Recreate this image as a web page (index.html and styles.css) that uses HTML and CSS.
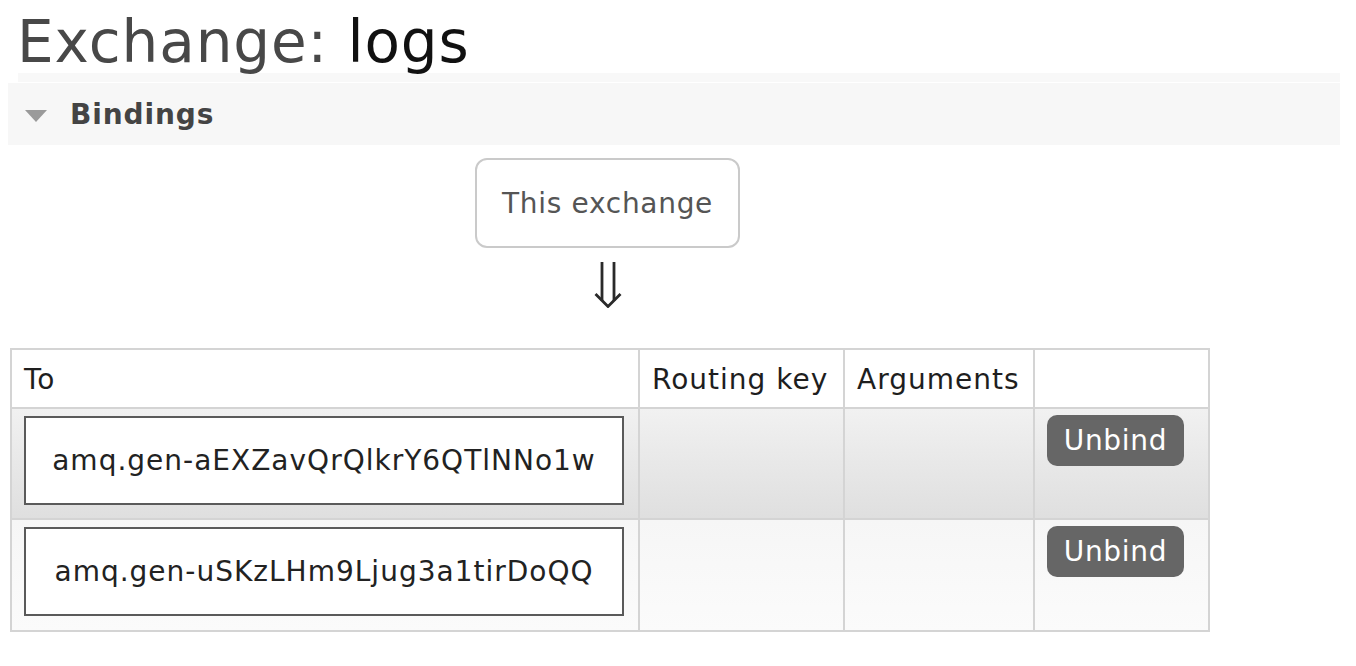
FILE: index.html
```html
<!DOCTYPE html>
<html>
<head>
<meta charset="utf-8">
<title>Exchange: logs</title>
<link rel="stylesheet" href="styles.css">
</head>
<body>
<div class="page">
  <h1 class="title">Exchange: <b class="name">logs</b></h1>
  <div class="strip"></div>
  <div class="section-head">
    <span class="tri"></span>
    <span class="section-title">Bindings</span>
  </div>
  <div class="bindings">
    <div class="flow">
      <div class="this-box">This exchange</div>
      <svg class="arrow" width="28" height="46" viewBox="0 0 28 46" aria-hidden="true">
        <path d="M8 0 V39 M20 0 V39" stroke="#2a2a2a" stroke-width="2.8" fill="none"/>
        <path d="M1.5 32 L14 44.5 L26.5 32" stroke="#2a2a2a" stroke-width="2.8" fill="none"/>
      </svg>
    </div>
    <table class="list">
      <colgroup>
        <col class="c-to">
        <col class="c-key">
        <col class="c-args">
        <col class="c-act">
      </colgroup>
      <thead>
        <tr>
          <th>To</th>
          <th>Routing key</th>
          <th>Arguments</th>
          <th></th>
        </tr>
      </thead>
      <tbody>
        <tr class="alt1">
          <td><span class="queue-box">amq.gen-aEXZavQrQlkrY6QTlNNo1w</span></td>
          <td></td>
          <td></td>
          <td><span class="btn">Unbind</span></td>
        </tr>
        <tr class="alt2">
          <td><span class="queue-box">amq.gen-uSKzLHm9Ljug3a1tirDoQQ</span></td>
          <td></td>
          <td></td>
          <td><span class="btn">Unbind</span></td>
        </tr>
      </tbody>
    </table>
  </div>
</div>
</body>
</html>
```
FILE: styles.css
```css
html, body {
  margin: 0;
  padding: 0;
  background: #fff;
}

body {
  font-family: "DejaVu Sans", Verdana, sans-serif;
  color: #222;
}

.page {
  padding: 0 16px 0 8px;
}

.title {
  margin: 0;
  padding: 13px 0 0 9px;
  height: 60px;
  font-size: 58px;
  line-height: 58px;
  font-weight: normal;
  color: #484848;
  letter-spacing: 0.9px;
  white-space: nowrap;
}

.title .name {
  font-weight: normal;
  color: #111;
}

.strip {
  margin-left: 10px;
  height: 9px;
  background: #f8f8f8;
  border-bottom: 1px solid #fff;
}

.section-head {
  height: 62px;
  background: #f7f7f7;
  display: flex;
  align-items: center;
}

.tri {
  width: 0;
  height: 0;
  margin-left: 17px;
  margin-top: 3px;
  border-left: 11px solid transparent;
  border-right: 11px solid transparent;
  border-top: 12px solid #9a9a9a;
}

.section-title {
  margin-left: 23px;
  font-size: 28px;
  font-weight: bold;
  color: #444;
  letter-spacing: 0.9px;
}

.bindings {
  margin-left: 2px;
  width: 1198px;
}

.flow {
  display: flex;
  flex-direction: column;
  align-items: center;
  padding-top: 13px;
  padding-right: 3px;
}

.this-box {
  box-sizing: border-box;
  width: 265px;
  height: 90px;
  border: 2px solid #cacaca;
  border-radius: 12px;
  display: flex;
  align-items: center;
  justify-content: center;
  font-size: 28px;
  letter-spacing: 0.7px;
  color: #555;
}

.arrow {
  display: block;
  margin-top: 14px;
}

.list {
  margin-top: 40px;
  width: 1198px;
  table-layout: fixed;
  border-collapse: separate;
  border-spacing: 0;
  border-top: 2px solid #d4d4d4;
  border-left: 2px solid #d4d4d4;
  font-size: 28px;
  letter-spacing: 1px;
}

.c-to { width: 628px; }
.c-key { width: 205px; }
.c-args { width: 190px; }
.c-act { width: 175px; }

.list th,
.list td {
  border-right: 2px solid #d4d4d4;
  border-bottom: 2px solid #d4d4d4;
  padding: 0;
}

.list th {
  text-align: left;
  font-weight: normal;
  line-height: 34px;
  padding: 13px 12px 10px;
  color: #1e1e1e;
  background: #fff;
  white-space: nowrap;
}

.list td {
  vertical-align: top;
  padding: 7px 12px 13px;
}

.alt1 td {
  background: linear-gradient(#f1f1f1, #dfdfdf);
}

.alt2 td {
  background: linear-gradient(#f6f6f6, #fbfbfb);
  padding-bottom: 14px;
}

.queue-box {
  box-sizing: border-box;
  display: flex;
  align-items: center;
  justify-content: center;
  width: 600px;
  height: 89px;
  border: 2px solid #5a5a5a;
  background: #fff;
  color: #222;
  white-space: nowrap;
}

.btn {
  display: flex;
  align-items: center;
  justify-content: center;
  width: 137px;
  height: 51px;
  border-radius: 10px;
  background: #666;
  color: #fff;
  letter-spacing: 0.7px;
  margin-top: -1px;
}
```
